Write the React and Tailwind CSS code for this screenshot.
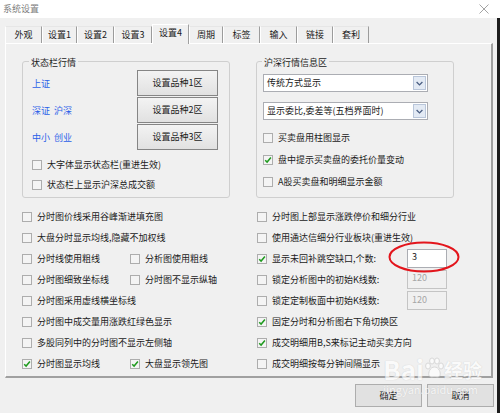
import React from 'react';

function Check({ checked }) {
  return (
    <span className="flex h-[10px] w-[10px] shrink-0 items-center justify-center border border-[#adadad] bg-[#f4f4f4]">
      {checked && (
        <svg width="8" height="8" viewBox="0 0 8 8">
          <path d="M1.2 4.2 L3.1 6.1 L6.9 1.6" fill="none" stroke="#1e9a1e" strokeWidth="1.5" />
        </svg>
      )}
    </span>
  );
}

function CB({ label, checked }) {
  return (
    <div className="flex items-center gap-[5px]">
      <Check checked={checked} />
      <span className="whitespace-nowrap">{label}</span>
    </div>
  );
}

function Drop({ text }) {
  return (
    <div className="flex h-[18px] w-[165px] items-center border border-[#abadb3] bg-white pl-[3px]">
      <span className="flex-1 whitespace-nowrap">{text}</span>
      <span className="mr-px flex h-[14px] w-[13px] items-center justify-center border border-[#b9c6da] bg-[#e3eaf4]">
        <svg width="7" height="5" viewBox="0 0 7 5">
          <path d="M0.6 1 L3.5 3.9 L6.4 1" fill="none" stroke="#4a5e82" strokeWidth="1.3" />
        </svg>
      </span>
    </div>
  );
}

const tabs = [
  ['外观', 'w-[37px]', false],
  ['设置1', 'w-[35px]', false],
  ['设置2', 'w-[37px]', false],
  ['设置3', 'w-[38px]', false],
  ['设置4', 'w-[37px]', true],
  ['周期', 'w-[34px]', false],
  ['标签', 'w-[37px]', false],
  ['输入', 'w-[37px]', false],
  ['链接', 'w-[36px]', false],
  ['套利', 'w-[36px]', false],
];

const areas = [
  [['上证'], '设置品种1区'],
  [['深证', '沪深'], '设置品种2区'],
  [['中小', '创业'], '设置品种3区'],
];

export default function App() {
  return (
    <div className="relative h-[413px] w-[500px] overflow-hidden bg-[#f0f0f0] font-['Noto_Sans_CJK_SC',sans-serif] text-[9px] leading-[12px] text-[#1a1a1a]">
      {/* title bar */}
      <div className="flex h-[18px] items-center justify-between bg-white pl-[3px] pr-[11px]">
        <span className="text-[#7d7d7d]">系统设置</span>
        <svg width="10" height="10" viewBox="0 0 10 10">
          <path d="M0.5 0.5 L9.5 9.5 M9.5 0.5 L0.5 9.5" stroke="#9a9a9a" strokeWidth="0.9" />
        </svg>
      </div>

      <div className="flex">
        <div className="w-[497px]">
          {/* tabs */}
          <div className="mt-[6px] flex h-[19px] items-end pl-[5px]">
            {tabs.map(([t, w, sel]) =>
              sel ? (
                <div
                  key={t}
                  className={`${w} relative z-10 -mb-px flex h-[20px] justify-center border-l border-t border-r border-l-white border-t-white border-r-[#a0a0a0] bg-[#f0f0f0] pt-[2px]`}
                >
                  {t}
                </div>
              ) : (
                <div
                  key={t}
                  className={`${w} flex h-[17px] items-center justify-center border-l border-t border-r border-l-white border-t-[#e6e6e6] border-r-[#9c9c9c]`}
                >
                  {t}
                </div>
              )
            )}
          </div>

          {/* panel */}
          <div className="ml-[5px] h-[335px] w-[488px] border-t border-l border-r-2 border-b-2 border-t-white border-l-white border-r-[#a0a0a0] border-b-[#a0a0a0] pl-[16px] pt-[17px]">
            <div className="flex items-start gap-[26px]">
              {/* left group */}
              <div className="relative h-[137px] w-[208px] rounded-[3px] border border-[#cfcfcf] pl-[9px] pt-[8px]">
                <span className="absolute -top-[5px] left-[6px] bg-[#f0f0f0] px-[2px]">状态栏行情</span>
                <div className="flex flex-col gap-[1px]">
                  {areas.map(([l, b]) => (
                    <div key={b} className="flex h-[26px] items-center">
                      <span className="flex w-[105px] gap-[4px] pt-[2px] text-[#2b5fe8]">
                        {l.map((w) => (
                          <span key={w}>{w}</span>
                        ))}
                      </span>
                      <button className="h-[26px] w-[81px] border border-[#858585] bg-[linear-gradient(#f3f3f3,#e1e1e1)] text-[9px] leading-[12px] text-[#1a1a1a]">
                        {b}
                      </button>
                    </div>
                  ))}
                </div>
                <div className="mt-[5px] flex flex-col">
                  <div className="flex h-[20px] items-center"><CB label="大字体显示状态栏(重进生效)" /></div>
                  <div className="flex h-[20px] items-center"><CB label="状态栏上显示沪深总成交额" /></div>
                </div>
              </div>

              {/* right group */}
              <div className="relative h-[137px] w-[198px] rounded-[3px] border border-[#cfcfcf] pl-[6px] pt-[12px]">
                <span className="absolute -top-[5px] left-[5px] bg-[#f0f0f0] px-[2px]">沪深行情信息区</span>
                <Drop text="传统方式显示" />
                <div className="mt-[10px]">
                  <Drop text="显示委比,委差等(五档界面时)" />
                </div>
                <div className="mt-[7px] flex flex-col">
                  <div className="flex h-[22px] items-center"><CB label="买卖盘用柱图显示" /></div>
                  <div className="flex h-[22px] items-center"><CB label="盘中提示买卖盘的委托价量变动" checked /></div>
                  <div className="flex h-[22px] items-center"><CB label="A股买卖盘和明细显示金额" /></div>
                </div>
              </div>
            </div>

            {/* lower options */}
            <div className="mt-[8px] flex">
              <div className="flex w-[235px] flex-col">
                <div className="flex h-[21px] items-center"><CB label="分时图价线采用谷峰渐进填充图" /></div>
                <div className="flex h-[21px] items-center"><CB label="大盘分时显示均线,隐藏不加权线" /></div>
                <div className="flex h-[21px] items-center">
                  <div className="w-[108px]"><CB label="分时线使用粗线" /></div>
                  <CB label="分析图使用粗线" />
                </div>
                <div className="flex h-[21px] items-center">
                  <div className="w-[108px]"><CB label="分时图细致坐标线" /></div>
                  <CB label="分时图不显示纵轴" />
                </div>
                <div className="flex h-[21px] items-center"><CB label="分时图采用虚线横坐标线" /></div>
                <div className="flex h-[21px] items-center"><CB label="分时图中成交量用涨跌红绿色显示" /></div>
                <div className="flex h-[21px] items-center"><CB label="多股同列中的分时图不显示左侧轴" /></div>
                <div className="flex h-[21px] items-center">
                  <div className="w-[108px]"><CB label="分时图显示均线" checked /></div>
                  <CB label="大盘显示领先图" checked />
                </div>
              </div>
              <div className="flex flex-col">
                <div className="flex h-[21px] items-center"><CB label="分时图上部显示涨跌停价和细分行业" /></div>
                <div className="flex h-[21px] items-center"><CB label="使用通达信细分行业板块(重进生效)" /></div>
                <div className="flex h-[21px] items-center">
                  <div className="w-[150px]"><CB label="显示未回补跳空缺口,个数:" checked /></div>
                  <div className="h-[19px] w-[40px] border border-[#abadb3] bg-white pl-[4px] pt-[1px] text-[9px]">3</div>
                </div>
                <div className="flex h-[21px] items-center">
                  <div className="w-[150px]"><CB label="锁定分析图中的初始K线数:" /></div>
                  <div className="h-[19px] w-[40px] border border-[#c4c4c4] bg-[#f0f0f0] pl-[4px] pt-[1px] text-[9px] text-[#a6a6a6]">120</div>
                </div>
                <div className="flex h-[21px] items-center">
                  <div className="w-[150px]"><CB label="锁定定制板面中初始K线数:" /></div>
                  <div className="h-[19px] w-[40px] border border-[#c4c4c4] bg-[#f0f0f0] pl-[4px] pt-[2px] text-[9px] text-[#a6a6a6]">120</div>
                </div>
                <div className="flex h-[21px] items-center"><CB label="固定分时和分析图右下角切换区" checked /></div>
                <div className="flex h-[21px] items-center"><CB label="成交明细用B,S来标记主动买卖方向" checked /></div>
                <div className="flex h-[21px] items-center"><CB label="成交明细按每分钟间隔显示" /></div>
              </div>
            </div>
          </div>

          {/* dialog buttons */}
          <div className="mt-[6px] flex justify-end gap-[5px] pr-[3px]">
            <button className="h-[23px] w-[67px] border border-[#adadad] bg-[#e1e1e1] text-[9px] leading-[12px] text-[#1a1a1a]">确定</button>
            <button className="h-[23px] w-[67px] border border-[#adadad] bg-[#e1e1e1] text-[9px] leading-[12px] text-[#1a1a1a]">取消</button>
          </div>
        </div>
        <div className="h-[395px] w-[3px] bg-[#1c1c1c]" />
      </div>

      {/* red annotation ellipse */}
      <svg className="absolute left-[388px] top-[241px]" width="72" height="32" viewBox="0 0 72 32">
        <ellipse cx="36" cy="16" rx="34.5" ry="14.5" fill="none" stroke="#e3151c" strokeWidth="2" />
      </svg>

      {/* watermark */}
      <div className="pointer-events-none absolute left-[383px] top-[356px] flex flex-col opacity-70">
        <div className="flex items-end">
          <span className="text-[26px] font-bold leading-[26px] text-white [text-shadow:0_0_1px_#b8b8b8]">Bai</span>
          <svg width="20" height="22" viewBox="0 0 20 22" className="mb-[3px]">
            <g fill="white" stroke="#c4c4c4" strokeWidth="0.8">
              <ellipse cx="4" cy="9" rx="2.4" ry="3" />
              <ellipse cx="8" cy="4" rx="2.4" ry="3" />
              <ellipse cx="13" cy="4" rx="2.4" ry="3" />
              <ellipse cx="17" cy="9" rx="2.4" ry="3" />
              <path d="M10.5 10 C6 10 4 16 5 18.5 C6 21 9 20 10.5 20 C12 20 15 21 16 18.5 C17 16 15 10 10.5 10 Z" />
            </g>
          </svg>
          <span className="mb-[1px] text-[19px] font-bold leading-[22px] text-white [text-shadow:0_0_1px_#b8b8b8]">经验</span>
        </div>
        <span className="mt-[1px] text-[11px] leading-[12px] text-white [text-shadow:0_0_1px_#bdbdbd]">jingyan.baidu.com</span>
      </div>
    </div>
  );
}
